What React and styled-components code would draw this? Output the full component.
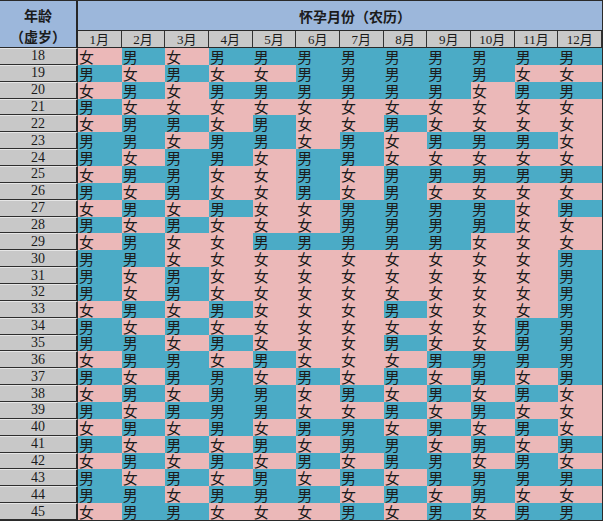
import React from "react";
import styled, { createGlobalStyle } from "styled-components";

const GlobalStyle = createGlobalStyle`
  html, body {
    margin: 0;
    padding: 0;
    background: #ffffff;
  }
`;

const months = ["1月", "2月", "3月", "4月", "5月", "6月", "7月", "8月", "9月", "10月", "11月", "12月"];

// 男 = M, 女 = F, ages 18..45
const chart = [
  "FMFMMMMMMMMM",
  "MFMFFMMMMMFF",
  "FMFMMMMMMFMM",
  "MFFFFFFFFFFF",
  "FMMFMFFMFFFF",
  "MMFMMFMFMMMF",
  "MFMMFMMFFFFF",
  "FMMFFMFMMMMM",
  "MFMFFMFMFFFF",
  "FMFMFFMMMMFM",
  "MFMFFFMMMMFF",
  "FMFFMMMMMFFF",
  "MMFFFFFFFFFM",
  "MFMFFFFFFFFM",
  "MFMFFFFFFFFM",
  "FMFMFFFMFFFM",
  "MFMFFFFFFFMM",
  "MMFMFFFMFFMM",
  "FMMFMFFFMMMM",
  "MFMMFMFMFMFM",
  "FMFMMFMFMFMF",
  "MFMMMFFMFMFF",
  "FMFMFMMFMFMF",
  "MFMFMFMMFMFM",
  "FMFMFMFMMFMF",
  "MFMFMFMFMMMM",
  "MMFMMMFMFMFF",
  "FMMFFFMFMFMM",
];

const Table = styled.div`
  display: grid;
  grid-template-columns: 78px repeat(12, 1fr);
  grid-template-rows: 30px 17px repeat(28, 1fr);
  width: 603px;
  height: 521px;
  box-sizing: border-box;
  border-top: 1px solid #2a2a2a;
  border-right: 1px solid #2a2a2a;
  border-bottom: 1px solid #2a2a2a;
  font-family: "Liberation Serif", "Noto Sans CJK SC", serif;
  color: #1b1b1b;
`;

const AgeHead = styled.div`
  grid-row: 1 / span 2;
  grid-column: 1;
  background: #9cb7db;
  border-right: 2px solid #262626;
  border-bottom: 1px solid #2a2a2a;
  display: flex;
  flex-direction: column;
  align-items: center;
  justify-content: space-between;
  padding: 6px 0 2px;
  font-family: "Noto Sans CJK SC", sans-serif;
  font-weight: 700;
  font-size: 14px;
  line-height: 17px;
`;

const Title = styled.div`
  grid-row: 1;
  grid-column: 2 / span 12;
  background: #9cb7db;
  border-bottom: 1px solid #2a2a2a;
  display: flex;
  align-items: center;
  justify-content: center;
  padding-left: 30px;
  font-family: "Noto Sans CJK SC", sans-serif;
  font-weight: 700;
  font-size: 14px;
`;

const MonthCell = styled.div`
  background: #c9c9c9;
  border-right: 1px solid #333;
  border-bottom: 1px solid #2a2a2a;
  display: flex;
  align-items: center;
  justify-content: center;
  font-size: 13px;
  line-height: 1;
  &:last-of-type {
    border-right: 0;
  }
`;

const AgeCell = styled.div`
  grid-column: 1;
  background: #c8c8c8;
  border-top: 1px solid #e6e6e6;
  border-bottom: 1px solid #2e2e2e;
  border-right: 2px solid #262626;
  display: flex;
  align-items: center;
  justify-content: center;
  font-size: 14px;
  line-height: 1;
`;

const GenderCell = styled.div`
  background: ${(p) => (p.$boy ? "#4babc6" : "#ebb8b8")};
  display: flex;
  align-items: center;
  padding-left: 1px;
  font-family: "Noto Sans CJK SC", sans-serif;
  font-size: 15px;
  line-height: 1;
  color: #1c1c1c;
`;

export default function App() {
  return (
    <>
      <GlobalStyle />
      <Table>
        <AgeHead>
          <span>年龄</span>
          <span>（虚岁）</span>
        </AgeHead>
        <Title>怀孕月份（农历）</Title>
        {months.map((m) => (
          <MonthCell key={m}>{m}</MonthCell>
        ))}
        {chart.map((row, i) => (
          <React.Fragment key={i}>
            <AgeCell>{18 + i}</AgeCell>
            {row.split("").map((g, j) => (
              <GenderCell key={j} $boy={g === "M"}>
                {g === "M" ? "男" : "女"}
              </GenderCell>
            ))}
          </React.Fragment>
        ))}
      </Table>
    </>
  );
}
